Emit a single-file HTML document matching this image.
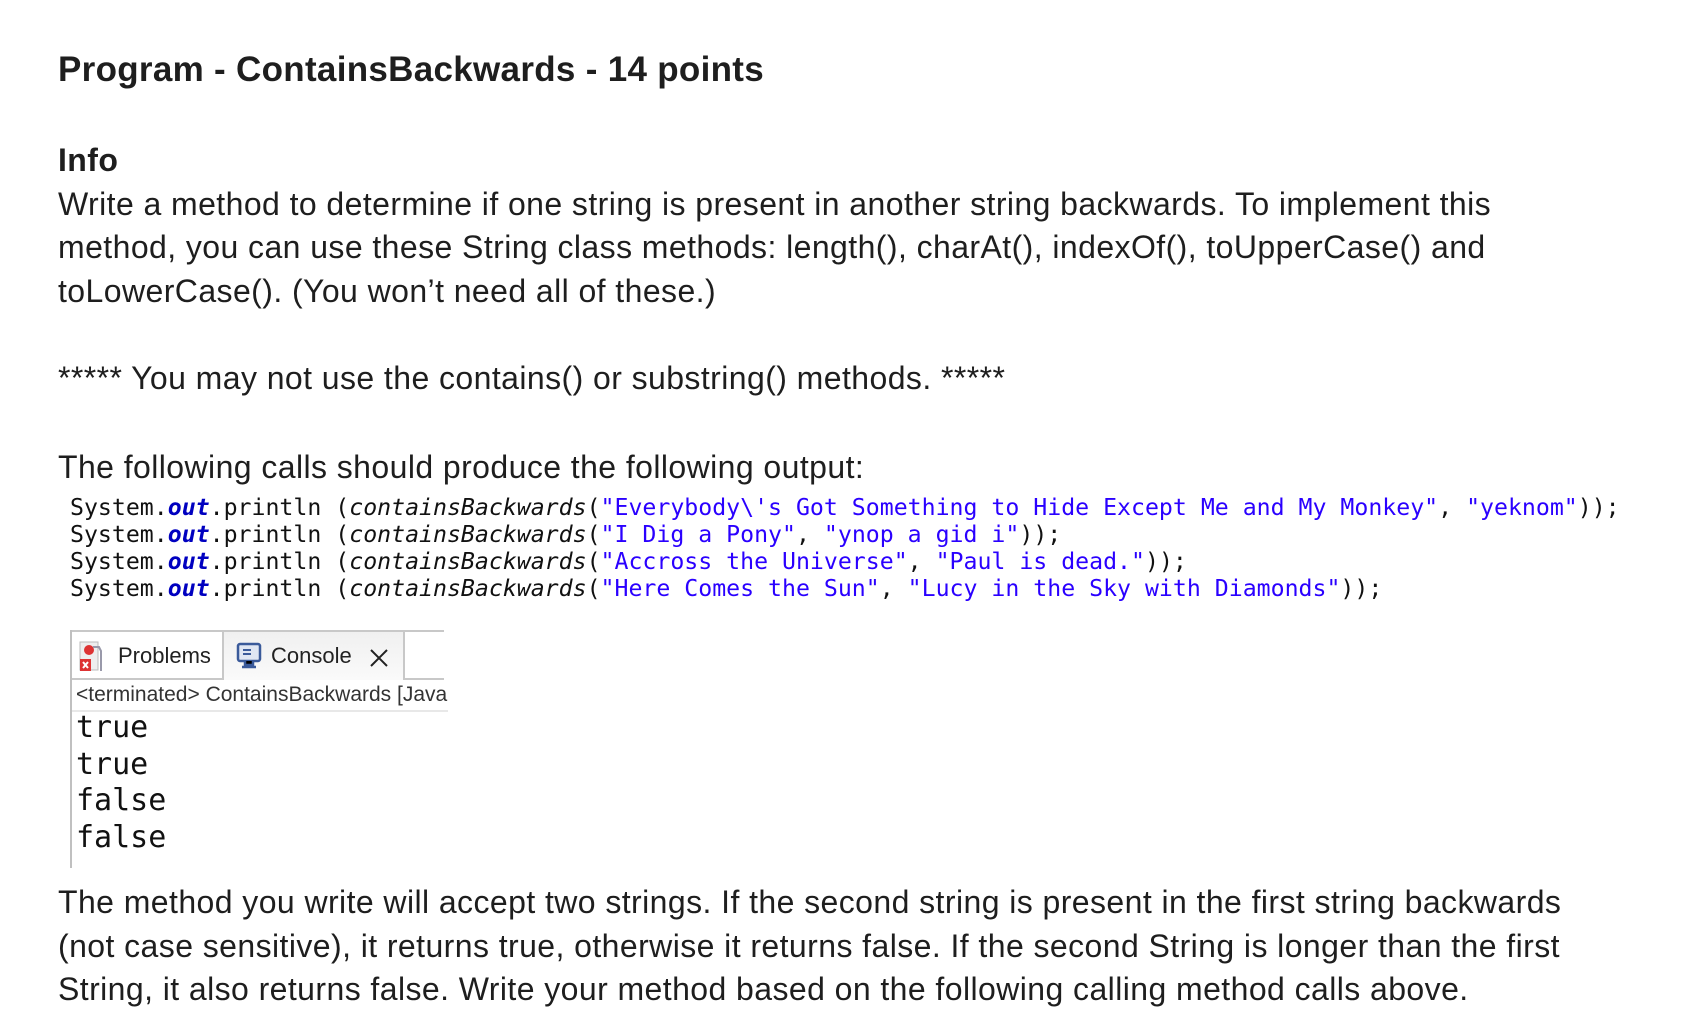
<!DOCTYPE html>
<html><head><meta charset="utf-8"><style>
body{margin:0;width:1684px;height:1034px;background:#fff;position:relative;overflow:hidden;font-family:"Liberation Sans",Arial,sans-serif;color:#1e1e1e}
.l{position:absolute;left:58px;white-space:nowrap;font-size:32px;letter-spacing:0.42px;line-height:36px}
.b{font-weight:bold}
.c{position:absolute;left:70px;white-space:nowrap;font-family:"DejaVu Sans Mono","Liberation Mono",monospace;font-size:23.2px;line-height:27px;color:#111}
.o{color:#0000c0;font-weight:bold;font-style:italic}
.i{font-style:italic}
.s{color:#2a00ff}
.out{position:absolute;left:76px;font-family:"DejaVu Sans Mono",monospace;font-size:30px;line-height:36.7px;color:#111}
</style></head><body>
<div class="l b" style="top:52px;font-size:35px;letter-spacing:0.3px">Program - ContainsBackwards - 14 points</div>
<div class="l b" style="top:142px;font-size:32px">Info</div>
<div class="l" style="top:186px">Write a method to determine if one string is present in another string backwards. To implement this</div>
<div class="l" style="top:229px">method, you can use these String class methods: length(), charAt(), indexOf(), toUpperCase() and</div>
<div class="l" style="top:273px">toLowerCase(). (You won’t need all of these.)</div>
<div class="l" style="top:360px">***** You may not use the contains() or substring() methods. *****</div>
<div class="l" style="top:449px">The following calls should produce the following output:</div>
<div class="c" style="top:494px">System.<span class="o">out</span>.println (<span class="i">containsBackwards</span>(<span class="s">"Everybody\'s Got Something to Hide Except Me and My Monkey"</span>, <span class="s">"yeknom"</span>));</div>
<div class="c" style="top:521px">System.<span class="o">out</span>.println (<span class="i">containsBackwards</span>(<span class="s">"I Dig a Pony"</span>, <span class="s">"ynop a gid i"</span>));</div>
<div class="c" style="top:548px">System.<span class="o">out</span>.println (<span class="i">containsBackwards</span>(<span class="s">"Accross the Universe"</span>, <span class="s">"Paul is dead."</span>));</div>
<div class="c" style="top:575px">System.<span class="o">out</span>.println (<span class="i">containsBackwards</span>(<span class="s">"Here Comes the Sun"</span>, <span class="s">"Lucy in the Sky with Diamonds"</span>));</div>

<div style="position:absolute;left:70px;top:630px;width:374px;height:2px;background:#c8c8c8"></div>
<div style="position:absolute;left:70px;top:630px;width:2px;height:238px;background:#c0c0c0"></div>
<div style="position:absolute;left:72px;top:632px;width:150px;height:46px;background:#fff;border-right:2px solid #c8c8c8;border-bottom:2px solid #c8c8c8"></div>
<div style="position:absolute;left:224px;top:632px;width:179px;height:48px;background:linear-gradient(#f0f0f0,#fafafa);border-right:2px solid #c8c8c8"></div>
<div style="position:absolute;left:405px;top:678px;width:39px;height:2px;background:#c8c8c8"></div>
<svg style="position:absolute;left:79px;top:641px" width="30" height="32" viewBox="0 0 30 32"><rect x="1" y="1" width="18" height="28" fill="#eee" stroke="#bbb"/><circle cx="10" cy="9" r="5" fill="#d33"/><path d="M14 6h6l2 4v20" fill="none" stroke="#99a" stroke-width="2"/><rect x="1" y="18" width="11" height="12" fill="#d33"/><path d="M4 21l5 6M9 21l-5 6" stroke="#fff" stroke-width="2"/></svg>
<div style="position:absolute;left:118px;top:643px;font-size:22px;color:#222">Problems</div>
<svg style="position:absolute;left:236px;top:642px" width="28" height="28" viewBox="0 0 28 28"><rect x="2" y="2" width="22" height="17" rx="2" fill="#dfe6f3" stroke="#3a5a9a" stroke-width="2.5"/><path d="M7 8h8M7 12h8" stroke="#3a5a9a" stroke-width="2"/><path d="M9 19v4h8v-4M6 25h14" stroke="#3a5a9a" stroke-width="2.5"/></svg>
<div style="position:absolute;left:271px;top:643px;font-size:22px;color:#222">Console</div>
<svg style="position:absolute;left:369px;top:648px" width="20" height="20"><path d="M2 2L18 18M18 2L2 18" stroke="#222" stroke-width="2"/></svg>
<div style="position:absolute;left:72px;top:680px;width:372px;height:30px;border-bottom:2px solid #e8e8e8;overflow:hidden;font-size:21px;line-height:30px;color:#333;white-space:nowrap;padding-left:4px">&lt;terminated&gt; ContainsBackwards [Java</div>
<div class="out" style="top:710px">true<br>true<br>false<br>false</div>

<div class="l" style="top:884px">The method you write will accept two strings. If the second string is present in the first string backwards</div>
<div class="l" style="top:928px">(not case sensitive), it returns true, otherwise it returns false. If the second String is longer than the first</div>
<div class="l" style="top:971px">String, it also returns false. Write your method based on the following calling method calls above.</div>
</body></html>
